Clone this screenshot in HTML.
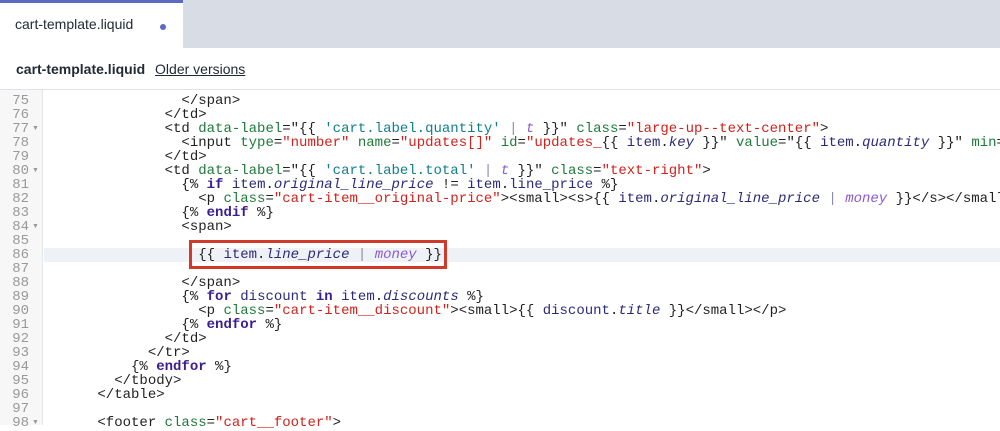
<!DOCTYPE html>
<html><head><meta charset="utf-8"><style>
*{margin:0;padding:0;box-sizing:border-box}
body{width:1000px;height:425px;overflow:hidden;background:#fff;font-family:"Liberation Sans",sans-serif;position:relative}
.tabbar{position:absolute;left:0;top:0;width:1000px;height:48px;background:#d8dce5}
.tab{position:absolute;left:0;top:0;width:183px;height:48px;background:#fff;border-top:3px solid #5c6ac4}
.tab span{position:absolute;left:15px;top:13px;font-size:14px;color:#212b36}
.dot{position:absolute;left:160px;top:21px;width:6px;height:6px;border-radius:50%;background:#5c6ac4}
.hdr{position:absolute;left:16px;top:61px;font-size:14px;color:#212b36}
.hdr b{font-weight:bold}
.hdr u{margin-left:6px;text-decoration:underline}
.sep{position:absolute;left:0;top:89px;width:1000px;height:1px;background:#dfe3e8}
.gut{position:absolute;left:0;top:90px;width:43px;height:335px;background:#f7f7f7;border-right:1px solid #e6e6e6}
.hl{position:absolute;left:44px;top:248px;width:956px;height:14px;background:#eef1f5}
.nums{position:absolute;left:0;top:94px;width:29px;text-align:right;font-family:"Liberation Mono",monospace;font-size:14px;line-height:14px;color:#999;white-space:pre}
.arr{position:absolute;left:32px;font-size:7px;color:#999}
pre{position:absolute;left:47px;top:94px;width:953px;overflow:hidden;font-family:"Liberation Mono",monospace;font-size:14px;line-height:14px;color:#222}
.a{color:#1f7a3a}.s{color:#d1221c}.q{color:#0f7f8c}.k{color:#3a1d8f;font-weight:bold}.v{color:#2c2a7a}.i{color:#2c2a7a;font-style:italic}.f{color:#8a5bd6;font-style:italic}.p{color:#8f8ca8}
.box{position:absolute;left:189px;top:240px;width:258px;height:29px;border:3px solid #d13a2a}
</style></head><body>
<div class="tabbar"><div class="tab"><span>cart-template.liquid</span><div class="dot"></div></div></div>
<div class="hdr"><b>cart-template.liquid</b> <u>Older versions</u></div>
<div class="sep"></div>
<div class="gut"></div>
<div class="hl"></div>
<div class="nums">75
76
77
78
79
80
81
82
83
84
85
86
87
88
89
90
91
92
93
94
95
96
97
98</div>
<div class="arr" style="top:125px">▼</div>
<div class="arr" style="top:167px">▼</div>
<div class="arr" style="top:223px">▼</div>
<div class="arr" style="top:419px">▼</div>
<pre>                &lt;/span&gt;
              &lt;/td&gt;
              &lt;td <span class="a">data-label</span>="{{ <span class="q">'cart.label.quantity'</span> <span class="p">|</span> <span class="f">t</span> }}" <span class="a">class</span>=<span class="s">"large-up--text-center"</span>&gt;
                &lt;input <span class="a">type</span>=<span class="s">"number"</span> <span class="a">name</span>=<span class="s">"updates[]"</span> <span class="a">id</span>=<span class="s">"updates_</span>{{ <span class="v">item</span>.<span class="i">key</span> }}" <span class="a">value</span>="{{ <span class="v">item</span>.<span class="i">quantity</span> }}" <span class="a">min</span>=
              &lt;/td&gt;
              &lt;td <span class="a">data-label</span>="{{ <span class="q">'cart.label.total'</span> <span class="p">|</span> <span class="f">t</span> }}" <span class="a">class</span>=<span class="s">"text-right"</span>&gt;
                {% <span class="k">if</span> <span class="v">item</span>.<span class="i">original_line_price</span> != <span class="v">item</span>.<span class="v">line_price</span> %}
                  &lt;p <span class="a">class</span>=<span class="s">"cart-item__original-price"</span>&gt;&lt;small&gt;&lt;s&gt;{{ <span class="v">item</span>.<span class="i">original_line_price</span> <span class="p">|</span> <span class="f">money</span> }}&lt;/s&gt;&lt;/small&gt;&lt;/p&gt;
                {% <span class="k">endif</span> %}
                &lt;span&gt;

                  {{ <span class="v">item</span>.<span class="i">line_price</span> <span class="p">|</span> <span class="f">money</span> }}

                &lt;/span&gt;
                {% <span class="k">for</span> <span class="v">discount</span> <span class="k">in</span> <span class="v">item</span>.<span class="i">discounts</span> %}
                  &lt;p <span class="a">class</span>=<span class="s">"cart-item__discount"</span>&gt;&lt;small&gt;{{ <span class="v">discount</span>.<span class="i">title</span> }}&lt;/small&gt;&lt;/p&gt;
                {% <span class="k">endfor</span> %}
              &lt;/td&gt;
            &lt;/tr&gt;
          {% <span class="k">endfor</span> %}
        &lt;/tbody&gt;
      &lt;/table&gt;

      &lt;footer <span class="a">class</span>=<span class="s">"cart__footer"</span>&gt;</pre>
<div class="box"></div>
</body></html>
